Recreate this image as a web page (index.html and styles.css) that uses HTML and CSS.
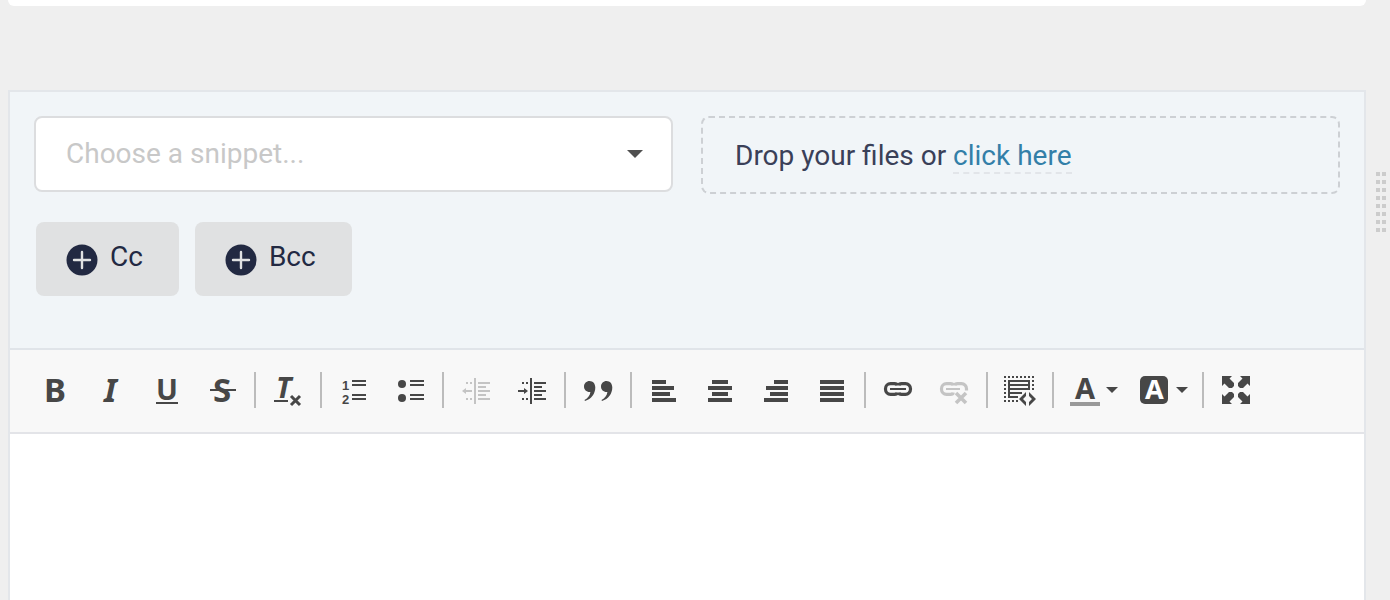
FILE: index.html
```html
<!DOCTYPE html>
<html lang="en">
<head>
    <meta charset="utf-8">
    <meta name="viewport" content="width=device-width, initial-scale=1">
    <title>Reply</title>
    <link rel="stylesheet" href="styles.css">
</head>
<body>
<main class="page">
    <div class="previous-card"></div>

    <form class="composer">
        <div class="composer-head">
            <div class="composer-row">
                <div class="snippet">
                    <select class="snippet-select" name="snippet" aria-label="Snippet">
                        <option value="">Choose a snippet...</option>
                    </select>
                </div>
                <div class="dropzone">
                    <span>Drop your files or <a class="dropzone-link" href="#">click here</a></span>
                </div>
            </div>
            <div class="recipients">
                <button type="button" class="add-btn">
                    <svg class="add-icon" viewBox="0 0 32 32"><circle cx="16" cy="16" r="15.5" fill="#222942"/><path d="M16 8v16M8 16h16" stroke="#e0e1e2" stroke-width="2.4" stroke-linecap="round"/></svg>
                    <span>Cc</span>
                </button>
                <button type="button" class="add-btn">
                    <svg class="add-icon" viewBox="0 0 32 32"><circle cx="16" cy="16" r="15.5" fill="#222942"/><path d="M16 8v16M8 16h16" stroke="#e0e1e2" stroke-width="2.4" stroke-linecap="round"/></svg>
                    <span>Bcc</span>
                </button>
            </div>
        </div>

        <div class="toolbar" role="toolbar" aria-label="Formatting">
            <button type="button" class="tool" aria-label="Bold">
                <svg class="icon" viewBox="0 0 32 32"><text class="letter" x="6" y="28">B</text></svg>
            </button>
            <button type="button" class="tool" aria-label="Italic">
                <svg class="icon" viewBox="0 0 32 32"><text class="letter italic" x="10" y="28">I</text></svg>
            </button>
            <button type="button" class="tool" aria-label="Underline">
                <svg class="icon" viewBox="0 0 32 32"><text class="letter mid" x="6" y="26">U</text><path d="M6 28h22v2H6z"/></svg>
            </button>
            <button type="button" class="tool" aria-label="Strikethrough">
                <svg class="icon" viewBox="0 0 32 32"><text class="letter" x="7" y="28">S</text><path d="M4 15h26v2H4z"/></svg>
            </button>
            <span class="sep"></span>
            <button type="button" class="tool" aria-label="Remove format">
                <svg class="icon" viewBox="0 0 32 32"><text class="letter italic mid" x="4" y="24">T</text><path d="M2 26h14v2H2z"/><path d="M19 22l9 9M28 22l-9 9" stroke="currentColor" stroke-width="3"/></svg>
            </button>
            <span class="sep"></span>
            <button type="button" class="tool" aria-label="Numbered list">
                <svg class="icon" viewBox="0 0 32 32"><text class="digit" x="4" y="16">1</text><text class="digit" x="4" y="30">2</text><path d="M14 6h14v2H14zM14 10h14v2H14zM14 20h14v2H14zM14 24h14v2H14z"/></svg>
            </button>
            <button type="button" class="tool" aria-label="Bulleted list">
                <svg class="icon" viewBox="0 0 32 32"><circle cx="8" cy="10" r="4"/><circle cx="8" cy="24" r="4"/><path d="M16 6h14v2H16zM16 10h14v2H16zM16 20h14v2H16zM16 24h14v2H16z"/></svg>
            </button>
            <span class="sep"></span>
            <button type="button" class="tool" aria-label="Decrease indent" disabled>
                <svg class="icon" viewBox="0 0 32 32"><path d="M14 4h2v26h-2zM18 8h12v2H18zM18 12h8v2h-8zM18 16h12v2H18zM18 20h8v2h-8zM18 24h12v2H18zM6 8h2v2H6zM10 8h2v2h-2zM6 24h2v2H6zM10 24h2v2h-2zM2 17l4-3v2h6v2H6v2z"/></svg>
            </button>
            <button type="button" class="tool" aria-label="Increase indent">
                <svg class="icon" viewBox="0 0 32 32"><path d="M14 4h2v26h-2zM18 8h12v2H18zM18 12h8v2h-8zM18 16h12v2H18zM18 20h8v2h-8zM18 24h12v2H18zM6 8h2v2H6zM10 8h2v2h-2zM6 24h2v2H6zM10 24h2v2h-2zM12 17l-4-3v2H2v2h6v2z"/></svg>
            </button>
            <span class="sep"></span>
            <button type="button" class="tool" aria-label="Block quote">
                <svg class="icon" viewBox="0 0 32 32"><path d="M7.500 7C11 7 13.300 9.800 13.300 13.500C13.300 19.500 9.500 25 3 27L2.500 26C6 24 8 21.500 8.400 18C4.500 18.300 2 15.800 2 12.500C2 9.400 4.500 7 7.500 7zM24.500 7C28 7 30.300 9.800 30.300 13.500C30.300 19.500 26.500 25 20 27L19.500 26C23 24 25 21.500 25.400 18C21.500 18.300 19 15.800 19 12.500C19 9.400 21.500 7 24.500 7z"/></svg>
            </button>
            <span class="sep"></span>
            <button type="button" class="tool" aria-label="Align left">
                <svg class="icon" viewBox="0 0 32 32"><path d="M4 6h14v4H4zM4 12h22v4H4zM4 18h18v4H4zM4 24h24v4H4z"/></svg>
            </button>
            <button type="button" class="tool" aria-label="Center">
                <svg class="icon" viewBox="0 0 32 32"><path d="M8 6h16v4H8zM4 12h24v4H4zM8 18h16v4H8zM4 24h24v4H4z"/></svg>
            </button>
            <button type="button" class="tool" aria-label="Align right">
                <svg class="icon" viewBox="0 0 32 32"><path d="M14 6h14v4H14zM6 12h22v4H6zM10 18h18v4H10zM4 24h24v4H4z"/></svg>
            </button>
            <button type="button" class="tool" aria-label="Justify">
                <svg class="icon" viewBox="0 0 32 32"><path d="M4 6h24v4H4zM4 12h24v4H4zM4 18h24v4H4zM4 24h24v4H4z"/></svg>
            </button>
            <span class="sep"></span>
            <button type="button" class="tool" aria-label="Link">
                <svg class="icon" viewBox="0 0 32 32"><path d="M15.200 11.500Q15 9.700 12.500 9.700H8.500a5 5 0 0 0-5 5v.6a5 5 0 0 0 5 5h4q2.500 0 2.700-1.800M16.800 11.500Q17 9.700 19.500 9.700h4a5 5 0 0 1 5 5v.6a5 5 0 0 1-5 5h-4q-2.500 0-2.700-1.800" fill="none" stroke="currentColor" stroke-width="3.200"/><path d="M8 14h16v2H8z"/></svg>
            </button>
            <button type="button" class="tool" aria-label="Unlink" disabled>
                <svg class="icon" viewBox="0 0 32 32"><path d="M15.200 11.500Q15 9.700 12.500 9.700H8.500a5 5 0 0 0-5 5v.6a5 5 0 0 0 5 5h4q2.500 0 2.700-1.800M16.800 11.500Q17 9.700 19.500 9.700h4a5 5 0 0 1 5 5v1.800" fill="none" stroke="currentColor" stroke-width="3.200"/><path d="M8 14h14v2H8z"/><path d="M18 19l10 10M28 19L18 29" stroke="currentColor" stroke-width="3.600"/></svg>
            </button>
            <span class="sep"></span>
            <button type="button" class="tool" aria-label="Source">
                <svg class="icon" viewBox="0 0 32 32"><path d="M0 3h30M0 27h14" stroke="currentColor" stroke-width="2" stroke-dasharray="2 2"/><path d="M1 6v20M29 6v12" stroke="currentColor" stroke-width="2" stroke-dasharray="2 2"/><path d="M4 6h22v10H6v2h12v2H6v2h8v2H4zM6 8v2h18V8zM6 12v2h18v-2z" fill-rule="evenodd"/><path d="M22 18v4l-3 3 3 3v4l-7-7zM25 18v4l3 3-3 3v4l7-7z"/></svg>
            </button>
            <span class="sep"></span>
            <button type="button" class="tool tool-menu" aria-label="Text color">
                <svg class="icon" viewBox="0 0 32 32"><text class="letter mid" x="5" y="25">A</text><path d="M0 28h30v4H0z" fill="#999"/></svg>
                <span class="caret"></span>
            </button>
            <button type="button" class="tool tool-menu" aria-label="Background color">
                <svg class="icon" viewBox="0 0 32 32"><rect y="2" width="28" height="28" rx="5"/><text class="letter small" x="5" y="25" fill="#fff">A</text></svg>
                <span class="caret"></span>
            </button>
            <span class="sep"></span>
            <button type="button" class="tool" aria-label="Maximize">
                <svg class="icon" viewBox="0 0 32 32"><path d="M2 2h10L9.500 4.500 14 9v3l-2 2H9L4.500 9.500 2 12zM30 2H20l2.500 2.500L18 9v3l2 2h3l4.500-4.500L30 12zM2 30h10l-2.500-2.500L14 23v-3l-2-2H9l-4.500 4.500L2 20zM30 30H20l2.500-2.500L18 23v-3l2-2h3l4.500 4.500L30 20z"/></svg>
            </button>
        </div>

        <textarea class="editor" name="message" aria-label="Message"></textarea>
    </form>
</main>

<svg class="grip" width="10" height="60" viewBox="0 0 10 60"><path d="M2 0v60M8 0v60" stroke="#ccc" stroke-width="4" stroke-dasharray="4 4"/></svg>
</body>
</html>
```
FILE: styles.css
```css
* {
    box-sizing: border-box;
}

body {
    display: flex;
    align-items: flex-start;
    min-height: 100vh;
    margin: 0;
    padding: 0 4px 0 8px;
    background: #efefef;
    color: #3a4058;
    font: 28px/40px Roboto, "Liberation Sans", sans-serif;
}

button,
select,
textarea {
    margin: 0;
    font: inherit;
}

.page {
    display: flex;
    flex: 1;
    flex-direction: column;
    min-height: 100vh;
}

.previous-card {
    height: 6px;
    margin-bottom: 84px;
    border-radius: 0 0 8px 8px;
    background: #fff;
}

.composer {
    display: flex;
    flex: 1;
    flex-direction: column;
    border: 2px solid #e3e6ea;
    border-bottom: 0;
    background: #fff;
}

.composer-head {
    padding: 24px 24px 52px;
    border-bottom: 2px solid #e0e4e9;
    background: #f1f5f8;
}

.composer-row {
    display: grid;
    grid-template-columns: 1fr 1fr;
    align-items: start;
    gap: 28px;
}

/* snippet drop-down */
.snippet {
    position: relative;
}

.snippet-select {
    display: block;
    width: 100%;
    height: 76px;
    padding: 0 64px 0 30px;
    appearance: none;
    border: 2px solid #dcdddf;
    border-radius: 8px;
    background: #fff;
    color: #c8c8c8;
}

.snippet::after {
    content: "";
    position: absolute;
    top: 34px;
    right: 30px;
    border: 8px solid transparent;
    border-top-color: #505050;
    border-bottom: 0;
    pointer-events: none;
}

.dropzone {
    height: 78px;
    padding: 18px 32px;
    border: 2px dashed #cdd0d4;
    border-radius: 8px;
}

.dropzone-link {
    border-bottom: 2px dashed #e2e5e9;
    color: #337fa8;
    text-decoration: none;
}

/* Cc / Bcc */
.recipients {
    display: flex;
    gap: 16px;
    padding: 28px 2px 0;
}

.add-btn {
    display: flex;
    align-items: center;
    gap: 12px;
    height: 74px;
    padding: 0 36px 4px 30px;
    border: 0;
    border-radius: 8px;
    background: #e0e1e2;
    color: #222942;
}

.add-icon {
    width: 32px;
    height: 32px;
    margin-top: 6px;
}

/* toolbar */
.toolbar {
    display: flex;
    flex-wrap: wrap;
    align-items: center;
    padding: 12px 16px 14px;
    border-bottom: 2px solid #e3e4e8;
    background: #f8f8f8;
}

.tool {
    display: flex;
    align-items: center;
    justify-content: center;
    width: 56px;
    height: 56px;
    padding: 0;
    border: 0;
    background: none;
    color: #474747;
}

.tool:disabled {
    color: #c4c4c4;
}

.tool-menu {
    gap: 4px;
    width: 70px;
    padding-left: 2px;
}

.icon {
    width: 32px;
    height: 32px;
    fill: currentColor;
    overflow: visible;
}

.sep {
    width: 2px;
    height: 36px;
    margin: 0 4px;
    background: #bcbcbc;
}

.caret {
    border: 6px solid transparent;
    border-top-color: #474747;
    border-bottom: 0;
}

.letter {
    font: bold 33px "Noto Sans", sans-serif;
}

.mid {
    font-size: 29px;
}

.small {
    font-size: 27px;
}

.italic {
    font-style: italic;
}

.digit {
    font: bold 13px "Liberation Sans", sans-serif;
}

.editor {
    flex: 1;
    width: 100%;
    min-height: 160px;
    padding: 24px;
    border: 0;
    outline: 0;
    resize: none;
    background: #fff;
    color: #333;
}

.grip {
    margin: 172px 0 0 10px;
}
```
